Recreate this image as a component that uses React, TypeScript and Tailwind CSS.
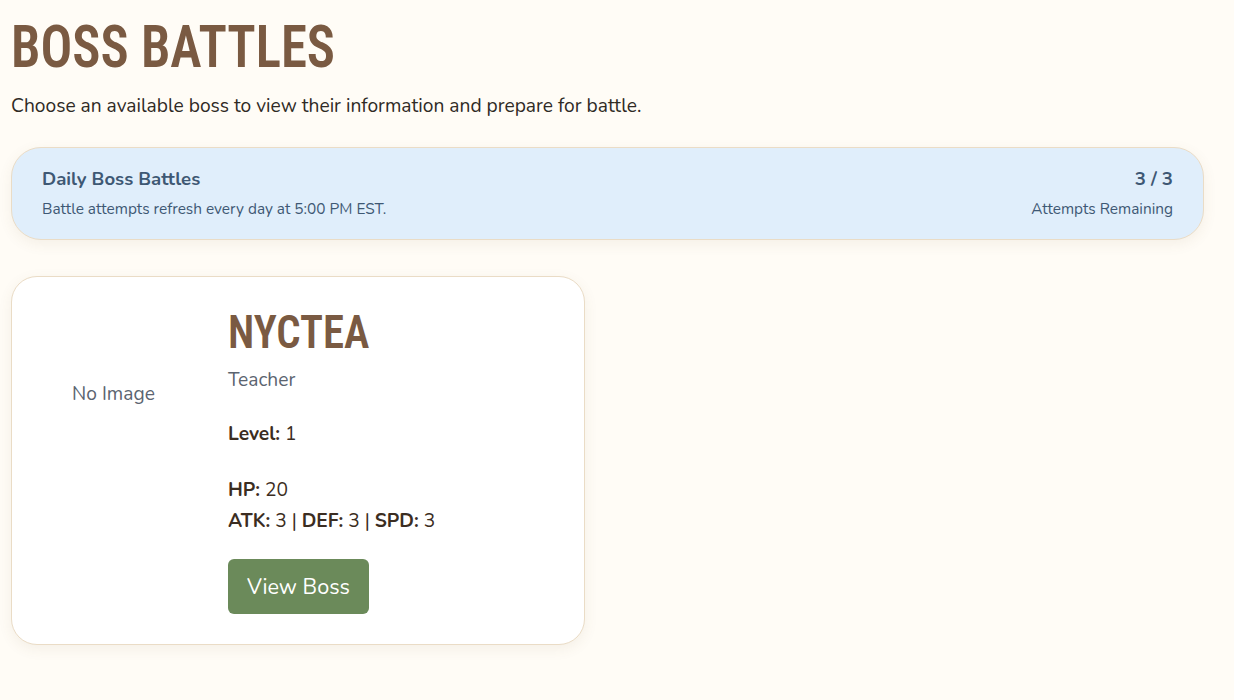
export default function App() {
  const body = { fontFamily: '"Nunito", "Lato", "Noto Sans", sans-serif' };
  const head = { fontFamily: '"Roboto Condensed", "Roboto", sans-serif', fontStretch: "condensed" as const };

  return (
    <main className="min-h-[700px] bg-[#fffcf6] text-[#3b2d22] pl-[11px] pr-[30px] pt-[17px] text-[19.2px]" style={body}>
      {/* header */}
      <h1 className="text-[60px] font-semibold leading-none text-[#7a5a42] uppercase" style={head}>
        <span className="inline-block origin-left scale-x-[0.88]">Boss Battles</span>
      </h1>
      <p className="mt-[15px] text-[#2f2a25]">
        Choose an available boss to view their information and prepare for battle.
      </p>

      {/* daily attempts */}
      <section className="mt-[26px] flex h-[93px] items-center justify-between rounded-[30px] border border-[#eadcc6] bg-[#e0eefb] px-[30px] text-[#3e5874] shadow-[0_4px_14px_rgba(120,90,50,0.08)]">
        <div>
          <h2 className="text-[18.6px] font-bold">Daily Boss Battles</h2>
          <p className="mt-[3px] text-[15.4px]">Battle attempts refresh every day at 5:00 PM EST.</p>
        </div>
        <div className="text-right">
          <div className="text-[18.6px] font-bold">3 / 3</div>
          <div className="mt-[3px] text-[15.4px]">Attempts Remaining</div>
        </div>
      </section>

      {/* boss list */}
      <div className="mt-[36px] grid grid-cols-2 gap-[45px]">
        <article className="flex items-start gap-[29px] rounded-[26px] border border-[#eadcc6] bg-white px-[16px] pt-[16px] pb-[30px] shadow-[0_4px_14px_rgba(120,90,50,0.08)]">
          <div className="flex h-[204px] w-[171px] shrink-0 items-center justify-center text-[#5b6470]">
            No Image
          </div>
          <div className="pt-[16px]">
            <h3 className="text-[46px] font-semibold leading-none text-[#7a5a42]" style={head}>
              <span className="inline-block origin-left scale-x-[0.93]">NYCTEA</span>
            </h3>
            <p className="mt-[11px] text-[#5b6470]">Teacher</p>
            <p className="mt-[25px]"><b>Level:</b> 1</p>
            <p className="mt-[27px] leading-[31px]"><b>HP:</b> 20</p>
            <p className="leading-[31px]">
              <b>ATK:</b> 3 | <b>DEF:</b> 3 | <b>SPD:</b> 3
            </p>
            <button className="mt-[22px] h-[55px] w-[141px] rounded-md bg-[#6b8a5a] text-[21.6px] text-white">
              View Boss
            </button>
          </div>
        </article>
      </div>
    </main>
  );
}
